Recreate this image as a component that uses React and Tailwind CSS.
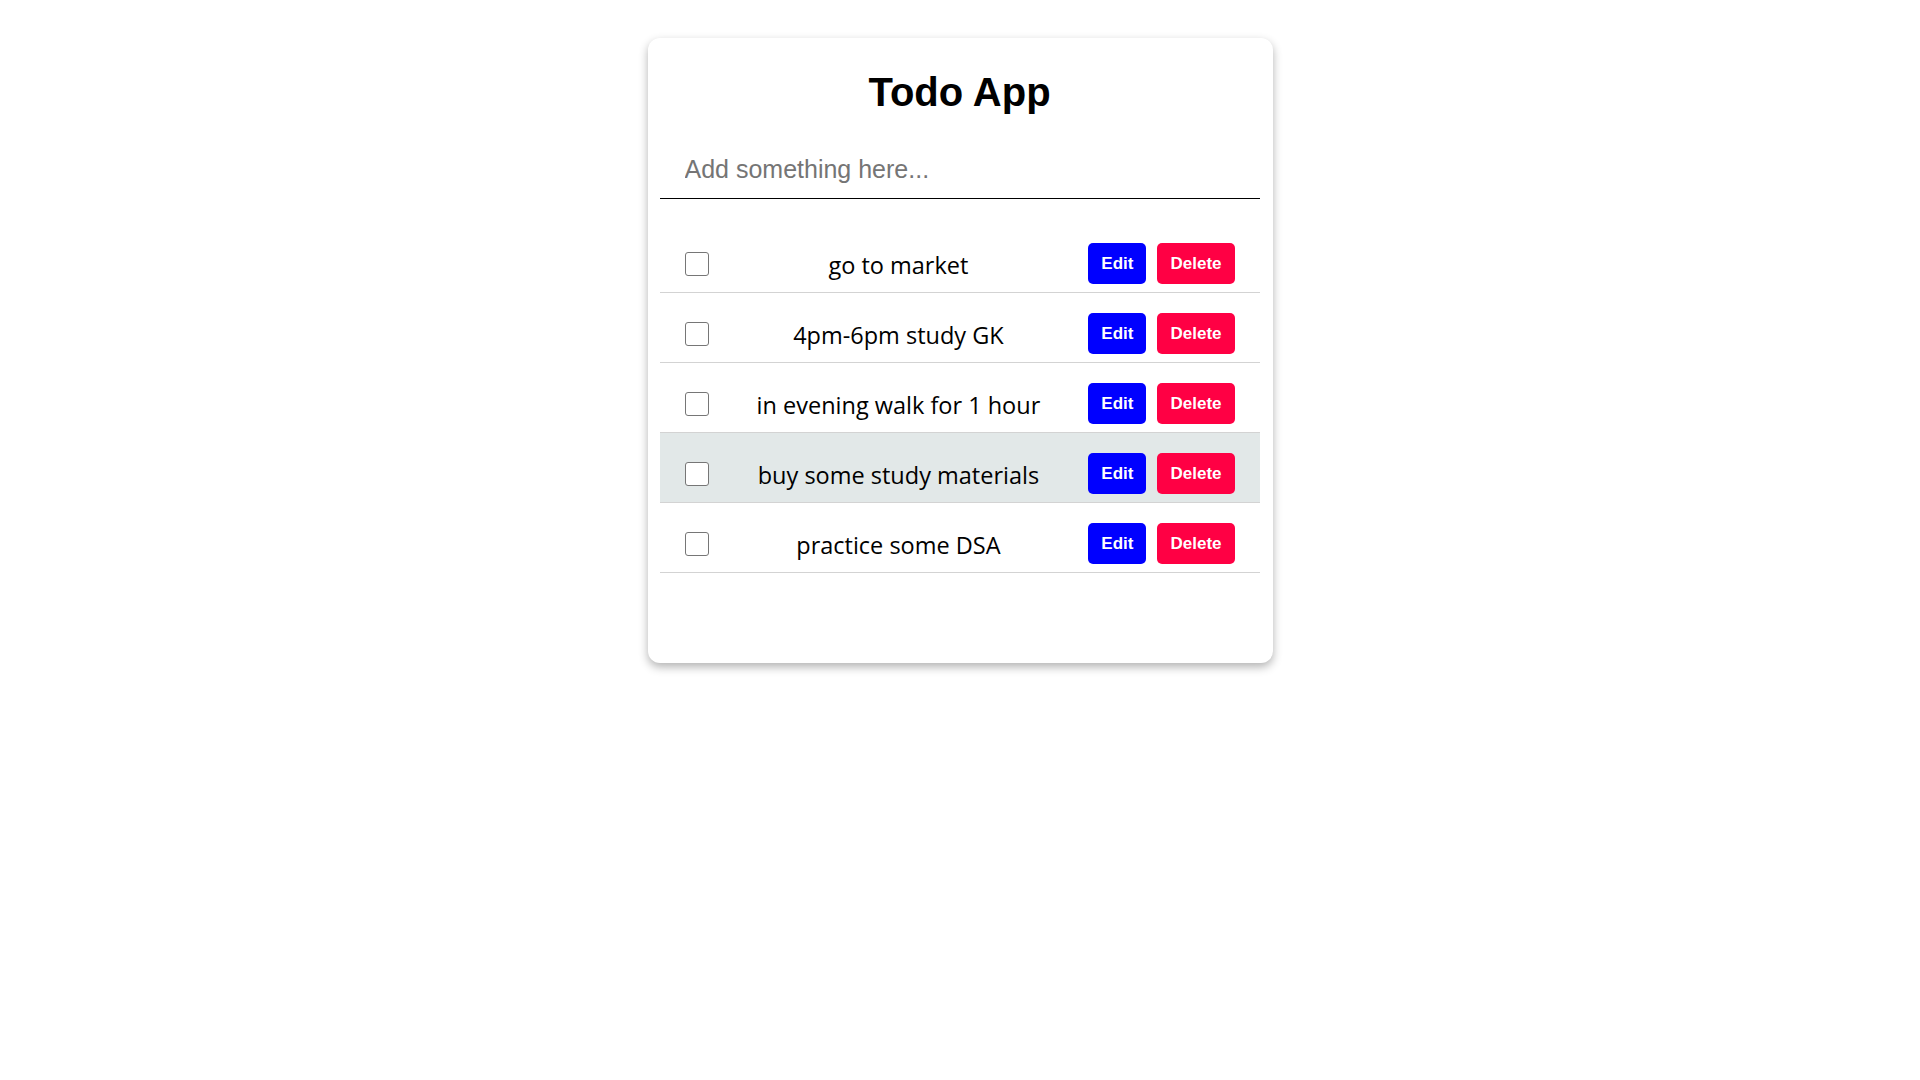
import React, { useState } from 'react';

const initialTodos = [
  { id: 1, text: 'go to market' },
  { id: 2, text: '4pm-6pm study GK' },
  { id: 3, text: 'in evening walk for 1 hour' },
  { id: 4, text: 'buy some study materials' },
  { id: 5, text: 'practice some DSA' },
];

const TodoItem = ({ todo, highlighted }) => (
  <li
    className={`flex items-center pt-[20px] pb-[8px] px-[25px] border-b border-[#d3d3d3] ${
      highlighted ? 'bg-[#e2e8e8]' : 'bg-white'
    }`}
  >
    <input
      type="checkbox"
      className="appearance-none w-6 h-6 shrink-0 border border-[#767676] rounded-[3px] bg-white"
    />
    <span className="flex-1 text-center text-[23.5px] leading-[32px] pt-[3px] text-black font-['Open_Sans','Noto_Sans',sans-serif]">
      {todo.text}
    </span>
    <div className="flex gap-[11px] font-['Liberation_Sans',Arial,sans-serif]">
      <button className="h-[41px] px-[13px] rounded-[5px] bg-[#0000ff] text-white font-bold text-[17px]">
        Edit
      </button>
      <button className="h-[41px] px-[13px] rounded-[5px] bg-[#ff0044] text-white font-bold text-[17px]">
        Delete
      </button>
    </div>
  </li>
);

export default function App() {
  const [todos] = useState(initialTodos);

  return (
    <div className="min-h-screen bg-white pt-[38px]">
      <div className="w-[625px] mx-auto bg-white rounded-xl pl-3 pr-[13px] pt-[31px] pb-[90px] shadow-[0_4px_10px_rgba(0,0,0,0.3)]">
        {/* Title */}
        <h1 className="text-center text-[40px] leading-[46px] font-bold text-black font-['Liberation_Sans',Arial,sans-serif]">
          Todo App
        </h1>

        {/* Input */}
        <input
          type="text"
          autoFocus
          placeholder="Add something here..."
          className="mt-[24px] block w-full pt-[16px] pb-[15px] pl-[25px] pr-4 text-[25px] leading-[28px] border-b border-black outline-none caret-black placeholder:text-[#757575] font-['Liberation_Sans',Arial,sans-serif]"
        />

        {/* List */}
        <ul className="mt-[24px]">
          {todos.map((todo) => (
            <TodoItem key={todo.id} todo={todo} highlighted={todo.id === 4} />
          ))}
        </ul>
      </div>
    </div>
  );
}
